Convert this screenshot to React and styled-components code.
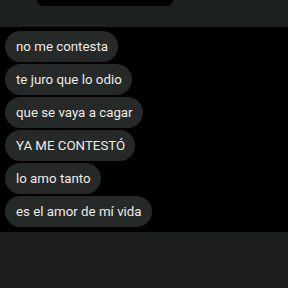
import React from 'react'
import styled, { createGlobalStyle } from 'styled-components'

const GlobalStyle = createGlobalStyle`
  html, body {
    margin: 0;
    padding: 0;
    background: #000;
  }
  #root {
    height: 288px;
  }
`

const messages = [
  'no me contesta',
  'te juro que lo odio',
  'que se vaya a cagar',
  'YA ME CONTESTÓ',
  'lo amo tanto',
  'es el amor de mí vida',
]

export default function App() {
  return (
    <>
      <GlobalStyle />
      <Screen>
        <TopBar>
          <Notch />
        </TopBar>
        <Chat>
          {messages.map((m) => (
            <Bubble key={m}>{m}</Bubble>
          ))}
        </Chat>
        <BottomBar />
      </Screen>
    </>
  )
}

const Screen = styled.div`
  height: 288px;
  display: flex;
  flex-direction: column;
  background: #000;
  font-family: Roboto, 'Noto Sans', sans-serif;
`

const TopBar = styled.div`
  height: 27px;
  background: #1c201e;
  flex-shrink: 0;
`

const Notch = styled.div`
  margin-left: 37px;
  width: 136px;
  height: 6px;
  background: #000;
  border-radius: 0 0 6px 6px;
`

const Chat = styled.div`
  display: flex;
  flex-direction: column;
  align-items: flex-start;
  gap: 2px;
  padding: 4px 0 0 5px;
  height: 205px;
  box-sizing: border-box;
  flex-shrink: 0;
`

const Bubble = styled.div`
  height: 31px;
  display: flex;
  align-items: center;
  padding: 0 10px 0 11px;
  border-radius: 16px;
  background: #252927;
  color: #ececec;
  font-size: 13.3px;
  white-space: nowrap;
`

const BottomBar = styled.div`
  flex: 1;
  background: #1b1e1c;
`
